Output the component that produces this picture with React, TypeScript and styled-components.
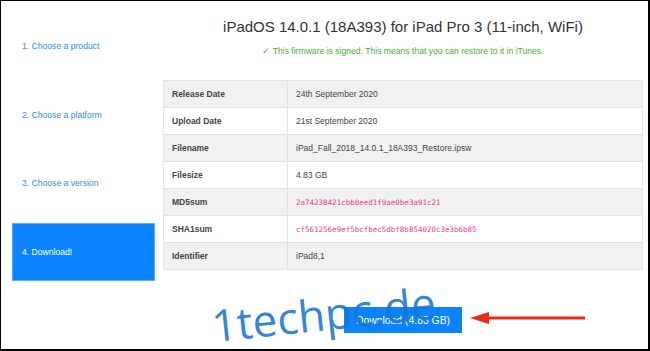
import React from 'react';
import styled, { createGlobalStyle } from 'styled-components';

const GlobalStyle = createGlobalStyle`
  html, body {
    margin: 0;
    padding: 0;
    background: #fff;
  }
  * {
    box-sizing: border-box;
  }
`;

const Frame = styled.div`
  position: relative;
  width: 650px;
  height: 351px;
  overflow: hidden;
  border-style: solid;
  border-color: #000;
  border-width: 1px 2px 2px 1px;
  background: #fff;
  display: flex;
  font-family: 'Liberation Sans', Arial, sans-serif;
`;

const Sidebar = styled.nav`
  width: 143px;
  margin-left: 11px;
  padding-top: 16px;
  display: flex;
  flex-direction: column;
  gap: 10.7px;
`;

const Step = styled.div<{ $active?: boolean }>`
  height: 58px;
  display: flex;
  align-items: center;
  padding-left: 9px;
  font-size: 8.6px;
  color: ${p => (p.$active ? '#fff' : '#2b8df5')};
  background: ${p => (p.$active ? '#0c84ff' : 'transparent')};
  border: 1px solid ${p => (p.$active ? '#5aaaff' : 'transparent')};
`;

const Main = styled.main`
  flex: 1;
  margin: 0 5px 0 8px;
  padding-top: 17px;
  display: flex;
  flex-direction: column;
  align-items: center;
`;

const Title = styled.h1`
  margin: 0;
  font-size: 15px;
  line-height: 18px;
  font-weight: normal;
  color: #333;
`;

const Signed = styled.p`
  margin: 10px 0 0;
  font-size: 8.6px;
  line-height: 10px;
  color: #3cb52a;
`;

const Table = styled.table`
  margin-top: 24px;
  width: 100%;
  border-collapse: collapse;
  border: 1px solid #e6e6e6;
  font-size: 8.5px;
  color: #444;
`;

const Row = styled.tr<{ $striped: boolean }>`
  height: 27px;
  background: ${p => (p.$striped ? '#f1f1f1' : '#fff')};
  border-top: 1px solid #e3e3e3;
`;

const Label = styled.th`
  width: 124px;
  text-align: left;
  padding: 0 8px;
  font-weight: bold;
  color: #444;
  border-right: 1px solid #e3e3e3;
`;

const Value = styled.td`
  padding: 0 8px;
`;

const Hash = styled.code`
  font-family: 'DejaVu Sans Mono', 'Liberation Mono', monospace;
  font-size: 7.5px;
  color: #e83e8c;
`;

const ButtonRow = styled.div`
  margin-top: 37px;
  display: flex;
  justify-content: center;
`;

const DownloadButton = styled.button`
  width: 118px;
  height: 26px;
  border: none;
  background: #0c84ff;
  color: #fff;
  font-family: 'Liberation Sans', Arial, sans-serif;
  font-size: 10.4px;
  padding: 0;
`;

const Arrow = styled.svg`
  position: absolute;
  left: 467px;
  top: 310px;
`;

const Watermark = styled.div`
  position: absolute;
  left: 213px;
  top: 302px;
  font-family: 'Open Sans', 'Noto Sans', sans-serif;
  font-size: 44px;
  line-height: 44px;
  color: rgba(22, 118, 210, 0.9);
  transform: rotate(-6deg);
  transform-origin: left bottom;
  pointer-events: none;
  white-space: nowrap;
`;

const steps = ['1. Choose a product', '2. Choose a platform', '3. Choose a version', '4. Download!'];

const rows: { label: string; value: string; hash?: boolean }[] = [
  { label: 'Release Date', value: '24th September 2020' },
  { label: 'Upload Date', value: '21st September 2020' },
  { label: 'Filename', value: 'iPad_Fall_2018_14.0.1_18A393_Restore.ipsw' },
  { label: 'Filesize', value: '4.83 GB' },
  { label: 'MD5sum', value: '2a74238421cbb0eed1f9ae0be3a91c21', hash: true },
  { label: 'SHA1sum', value: 'cf561256e9ef5bcfbec5dbf8b854020c3e3b6b85', hash: true },
  { label: 'Identifier', value: 'iPad8,1' },
];

export default function App() {
  return (
    <>
      <GlobalStyle />
      <Frame>
        <Sidebar>
          {steps.map((s, i) => (
            <Step key={s} $active={i === steps.length - 1}>
              {s}
            </Step>
          ))}
        </Sidebar>
        <Main>
          <Title>iPadOS 14.0.1 (18A393) for iPad Pro 3 (11-inch, WiFi)</Title>
          <Signed>✓ This firmware is signed. This means that you can restore to it in iTunes.</Signed>
          <Table>
            <tbody>
              {rows.map((r, i) => (
                <Row key={r.label} $striped={i % 2 === 0}>
                  <Label>{r.label}</Label>
                  <Value>{r.hash ? <Hash>{r.value}</Hash> : r.value}</Value>
                </Row>
              ))}
            </tbody>
          </Table>
          <ButtonRow>
            <DownloadButton>Download (4.83 GB)</DownloadButton>
          </ButtonRow>
        </Main>
        <Arrow width="120" height="16" viewBox="0 0 120 16">
          <polygon points="2,7 21,1 21,13" fill="#ee2a1a" />
          <rect x="20" y="5.5" width="97" height="3" fill="#ee2a1a" />
        </Arrow>
        <Watermark>1techpc.de</Watermark>
      </Frame>
    </>
  );
}
